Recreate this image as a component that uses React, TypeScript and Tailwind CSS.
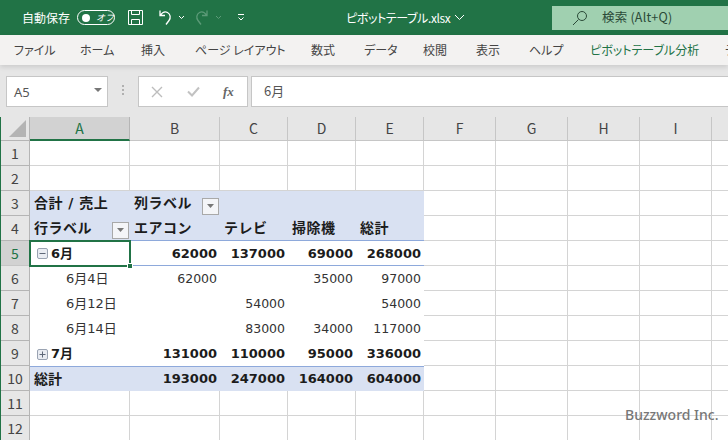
const font = "[font-family:'Noto_Sans_CJK_JP',sans-serif]";
const cellFont = "[font-family:'DejaVu_Sans','Noto_Sans_CJK_JP',sans-serif]";

const columns = ["A", "B", "C", "D", "E", "F", "G", "H", "I", ""];
const tabs = [
  { label: "ファイル", w: "w-[66px]" },
  { label: "ホーム", w: "w-[61px]" },
  { label: "挿入", w: "w-[54px]" },
  { label: "ページ レイアウト", w: "w-[116px]" },
  { label: "数式", w: "w-[53px]" },
  { label: "データ", w: "w-[59px]" },
  { label: "校閲", w: "w-[53px]" },
  { label: "表示", w: "w-[53px]" },
  { label: "ヘルプ", w: "w-[61px]" },
];

type Row = { cells: string[]; kind?: "head" | "total" | "bold" | "detail" | "blank" };

const rows: Row[] = [
  { cells: [], kind: "blank" },
  { cells: [], kind: "blank" },
  { cells: ["合計 / 売上", "列ラベル"], kind: "head" },
  { cells: ["行ラベル", "エアコン", "テレビ", "掃除機", "総計"], kind: "head" },
  { cells: ["6月", "62000", "137000", "69000", "268000"], kind: "bold" },
  { cells: ["6月4日", "62000", "", "35000", "97000"], kind: "detail" },
  { cells: ["6月12日", "", "54000", "", "54000"], kind: "detail" },
  { cells: ["6月14日", "", "83000", "34000", "117000"], kind: "detail" },
  { cells: ["7月", "131000", "110000", "95000", "336000"], kind: "bold" },
  { cells: ["総計", "193000", "247000", "164000", "604000"], kind: "total" },
  { cells: [], kind: "blank" },
  { cells: [], kind: "blank" },
];

function FilterButton() {
  return (
    <span className="flex h-[17px] w-[17px] items-center justify-center border border-[#a9a9a9] bg-[#f4f5f8]">
      <svg width="9" height="5" viewBox="0 0 9 5">
        <path d="M1 0h7L4.5 4z" fill="#777" />
      </svg>
    </span>
  );
}

function Expander({ open }: { open: boolean }) {
  return (
    <svg width="11" height="11" viewBox="0 0 11 11" className="shrink-0">
      <rect x="0.5" y="0.5" width="10" height="10" rx="1.5" fill="#e9ecf2" stroke="#9aa3b2" />
      <path d={open ? "M2.5 5.5h6" : "M2.5 5.5h6M5.5 2.5v6"} stroke="#5f6878" />
    </svg>
  );
}

function PivotCell({ row, col, value }: { row: number; col: number; value: string }) {
  const kind = rows[row].kind;
  const borders = "border-r border-b border-[#d4d4d4]";
  if (kind === "blank" || col > 4) {
    return <div className={`${borders} bg-white`} />;
  }
  if (kind === "head") {
    return (
      <div className={`flex items-center whitespace-nowrap bg-[#d9e1f2] pl-[4px] text-[14px] font-bold text-[#1c1c1c] ${row === 3 ? "border-b border-[#8ea9db]" : ""}`}>
        <span className="whitespace-pre tracking-[0.5px]">{value}</span>
        {row === 2 && col === 1 && <span className="ml-[10px] mt-[6px]"><FilterButton /></span>}
        {row === 3 && col === 0 && <span className="ml-auto mr-[1px] mt-[5px]"><FilterButton /></span>}
      </div>
    );
  }
  if (kind === "total") {
    return (
      <div className={`flex items-center bg-[#d9e1f2] font-bold text-[#1c1c1c] border-t border-[#8ea9db] ${col === 0 ? "pl-[4px] text-[14px]" : "justify-end pr-[3px] text-[13px]"}`}>
        {value}
      </div>
    );
  }
  if (kind === "bold") {
    return (
      <div className={`flex items-center bg-white pt-[1px] text-[13px] font-bold text-[#1c1c1c] ${row === 4 ? "border-b border-[#8ea9db]" : ""} ${col === 0 ? "gap-[3px] pl-[7px]" : "justify-end pr-[3px]"}`}>
        {col === 0 && <Expander open={row === 4} />}
        {value}
      </div>
    );
  }
  return (
    <div className={`flex items-center whitespace-nowrap bg-white pt-[1px] text-[#333] ${col === 0 ? "pl-[36px] text-[13px]" : "justify-end pr-[3px] text-[12.5px]"}`}>
      {value}
    </div>
  );
}

export default function App() {
  return (
    <div className={`relative h-[440px] w-[728px] overflow-hidden bg-white ${font}`}>
      {/* タイトルバー */}
      <div className="flex h-[35px] items-center bg-[#217346] text-white">
        <div className="flex w-[552px] shrink-0 items-center">
          <span className="ml-[22px] text-[12px]">自動保存</span>
          <span className="ml-[7px] flex h-[15px] w-[38px] items-center rounded-full border border-white pl-[4px]">
            <span className="h-[8px] w-[8px] rounded-full bg-white" />
            <span className="ml-[6px] text-[9px] italic">オフ</span>
          </span>
          <svg width="17" height="17" viewBox="0 0 17 17" fill="none" stroke="#fff" className="ml-[12px]">
            <path d="M1.5 1.5h14v14h-14z" />
            <path d="M4.5 1.5v4h8v-4M4.5 15.5v-5h8v5" />
          </svg>
          <svg width="17" height="17" viewBox="0 0 17 17" fill="none" stroke="#fff" strokeWidth="1.3" className="ml-[12px]">
            <path d="M4 1.5v5h5M4.2 6.4C6 3.8 9 2.2 11.5 3.5c3 1.6 3.5 5.5 1.5 8l-3 4" />
          </svg>
          <svg width="7" height="5" viewBox="0 0 7 5" fill="none" stroke="#fff" className="ml-[5px]">
            <path d="M1 1l2.5 2.5L6 1" />
          </svg>
          <svg width="17" height="17" viewBox="0 0 17 17" fill="none" stroke="#5c9a78" strokeWidth="1.3" className="ml-[9px]">
            <path d="M13 1.5v5H8M12.8 6.4C11 3.8 8 2.2 5.5 3.5c-3 1.6-3.5 5.5-1.5 8l3 4" />
          </svg>
          <svg width="7" height="5" viewBox="0 0 7 5" fill="none" stroke="#5c9a78" className="ml-[4px]">
            <path d="M1 1l2.5 2.5L6 1" />
          </svg>
          <svg width="8" height="7" viewBox="0 0 8 7" fill="none" stroke="#fff" className="ml-[15px]">
            <path d="M1 .5h6M1.5 3.5L4 6l2.5-2.5" />
          </svg>
          <span className="ml-[101px] flex items-center text-[12px] tracking-[-0.4px] [font-feature-settings:'palt']">
            ピボットテーブル.xlsx
            <svg width="11" height="7" viewBox="0 0 11 7" fill="none" stroke="#fff" className="ml-[4px]">
              <path d="M1 1l4.5 4.5L10 1" />
            </svg>
          </span>
        </div>
        <div className="flex h-[24px] flex-1 items-center bg-[#a0d0b0] text-[12.5px] tracking-[0.2px] text-[#2b4a38]">
          <svg width="16" height="16" viewBox="0 0 16 16" fill="none" stroke="#2b4a38" className="ml-[20px]">
            <circle cx="10" cy="6" r="4.5" />
            <path d="M6.5 9.5L1 15" />
          </svg>
          <span className="ml-[14px]">検索 (Alt+Q)</span>
        </div>
      </div>

      {/* リボンのタブ */}
      <div className="relative z-10 flex h-[30px] items-center bg-[#f3f2f1] pl-[14px] text-[12px] text-[#444] shadow-[0_2px_5px_rgba(0,0,0,0.12)] [font-feature-settings:'palt']">
        {tabs.map((t) => (
          <span key={t.label} className={`${t.w} shrink-0 whitespace-pre`}>
            {t.label}
          </span>
        ))}
        <span className="w-[135px] shrink-0 whitespace-nowrap text-[#217346]">ピボットテーブル分析</span>
        <span className="shrink-0 whitespace-nowrap text-[#444]">デザイン</span>
      </div>

      {/* 数式バー */}
      <div className="flex h-[52px] items-start bg-[#e6e6e6] pl-[6px] pt-[11px]">
        <div className="flex h-[31px] w-[102px] items-center justify-between border border-[#c6c6c6] bg-white pl-[7px] pr-[4px] text-[13px] text-[#555]">
          <span className="mt-[3px] [font-family:'Noto_Sans',sans-serif]">A5</span>
          <svg width="8" height="4" viewBox="0 0 8 4" className="mr-[1px] mb-[3px]">
            <path d="M0 0h8L4 4z" fill="#777" />
          </svg>
        </div>
        <div className="ml-[14px] mt-[9px] flex w-[3px] flex-col gap-[2px]">
          <span className="h-[2px] w-[2px] bg-[#b0b0b0]" />
          <span className="h-[2px] w-[2px] bg-[#b0b0b0]" />
          <span className="h-[2px] w-[2px] bg-[#b0b0b0]" />
        </div>
        <div className="ml-[13px] flex h-[31px] w-[110px] items-center border border-[#c6c6c6] bg-white">
          <svg width="12" height="12" viewBox="0 0 12 12" stroke="#bdbdbd" strokeWidth="1.4" className="ml-[12px]">
            <path d="M1 1l10 10M11 1L1 11" />
          </svg>
          <svg width="13" height="11" viewBox="0 0 13 11" fill="none" stroke="#c2c2c2" strokeWidth="2" className="ml-[24px]">
            <path d="M1 5.5l4 4 7-8" />
          </svg>
          <span className="ml-[23px] text-[13px] font-bold italic text-[#666] [font-family:'Liberation_Serif',serif]">fx</span>
        </div>
        <div className="ml-[3px] flex h-[31px] flex-1 items-center border border-[#c6c6c6] border-r-0 bg-white pb-[2px] pl-[12px] text-[13px] text-[#555]">
          6月
        </div>
      </div>

      {/* シート */}
      <div className={`relative grid grid-cols-[29px_100px_90px_68px_68px_68px_72px_72px_72px_72px_72px] grid-rows-[24px_repeat(12,25px)] border-l border-[#217346] ${cellFont}`}>
        <div className="flex items-end justify-end border-r border-b border-[#b5b5b5] bg-[#e6e6e6] pb-[3px] pr-[3px]">
          <svg width="17" height="17" viewBox="0 0 17 17">
            <path d="M17 0v17H0z" fill="#b4b4b4" />
          </svg>
        </div>
        {columns.map((c) => (
          <div
            key={c}
            className={`flex items-center justify-center border-r text-[14px] ${font} ${
              c === "A"
                ? "border-b-2 border-r-[#b5b5b5] border-b-[#217346] bg-[#d2d2d2] text-[#217346]"
                : "border-b border-[#c6c6c6] bg-[#e6e6e6] text-[#444]"
            }`}
          >
            {c}
          </div>
        ))}
        {rows.map((row, r) => (
          <div key={r} className="contents">
            <div
              className={`flex items-center justify-center border-r border-b text-[14px] ${font} ${
                r === 4
                  ? "border-r-[#217346] border-b-[#c6c6c6] bg-[#d2d2d2] text-[#217346]"
                  : "border-[#b5b5b5] bg-[#e6e6e6] text-[#444]"
              }`}
            >
              {r + 1}
            </div>
            {columns.map((c, i) => (
              <PivotCell key={i} row={r} col={i} value={row.cells[i] ?? ""} />
            ))}
          </div>
        ))}
        {/* 選択セル */}
        <div className="absolute left-[28px] top-[123px] h-[27px] w-[102px] border-2 border-[#217346]">
          <span className="absolute -bottom-[4px] -right-[4px] h-[6px] w-[6px] border border-white bg-[#217346]" />
        </div>
      </div>

      {/* 透かし */}
      <span className="absolute left-[625px] top-[404px] text-[14px] font-medium text-[#777] [font-family:'Noto_Sans',sans-serif]">
        Buzzword Inc.
      </span>
    </div>
  );
}
